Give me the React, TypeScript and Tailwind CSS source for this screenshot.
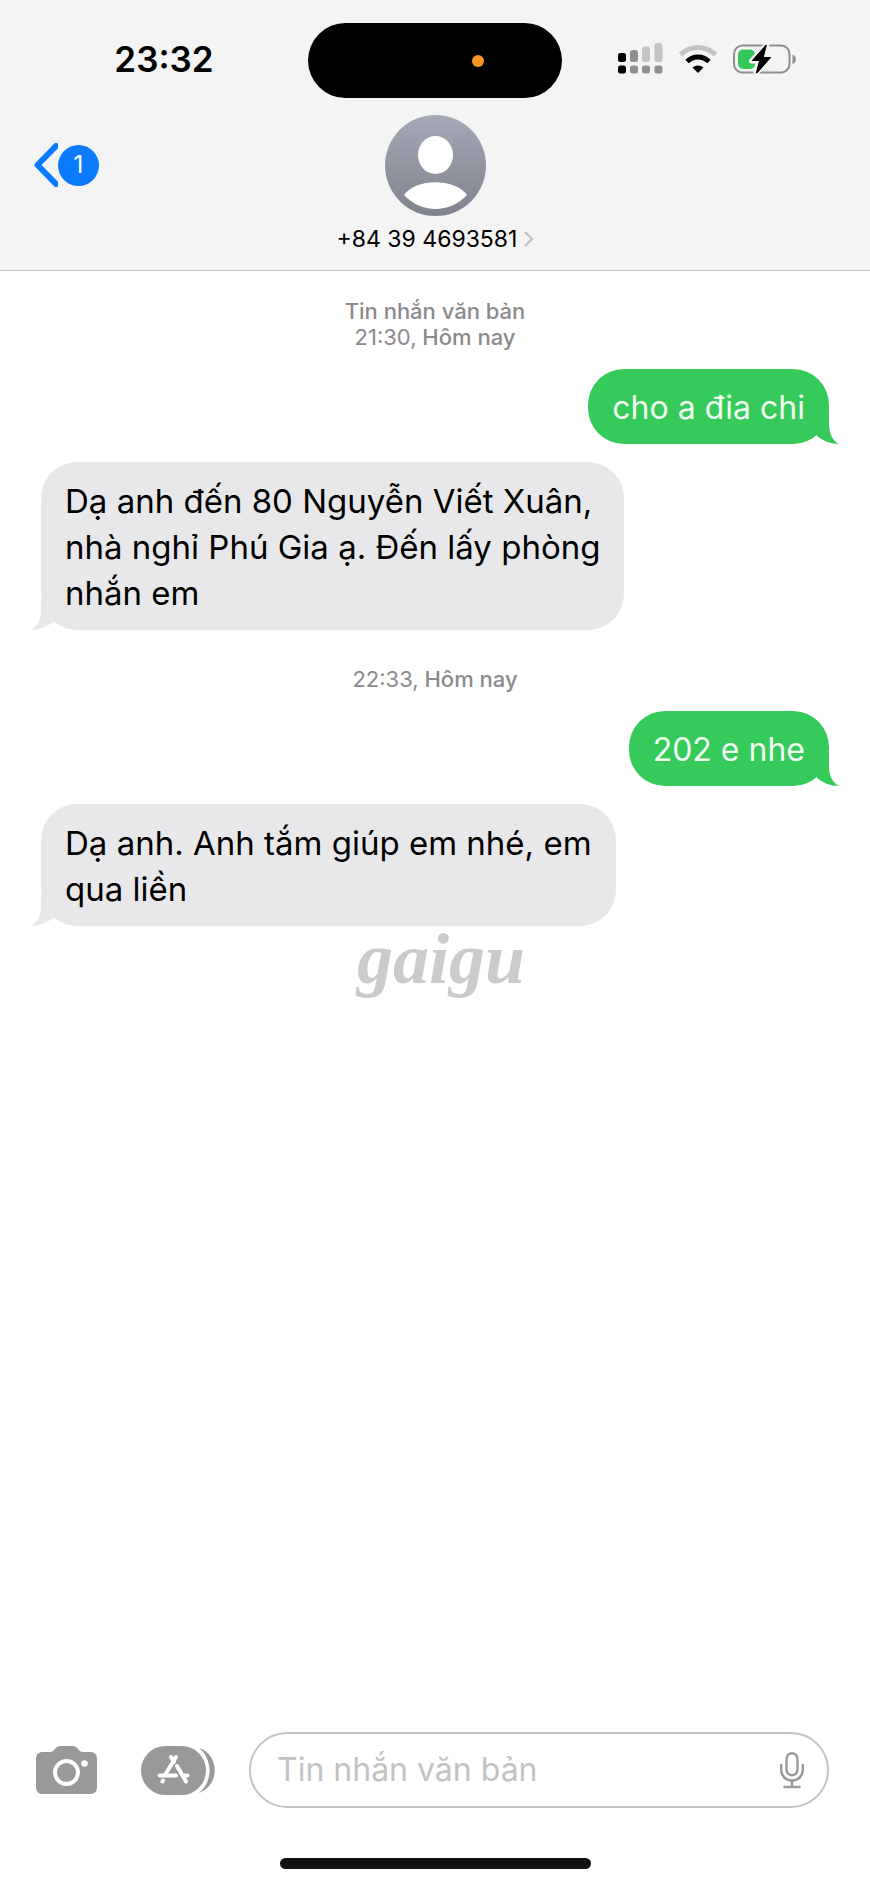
import React from 'react';

type Message = {
    id: number;
    from: 'me' | 'them';
    text: string;
};

type Section = {
    id: number;
    title?: string;
    time: string;
    day: string;
    messages: Message[];
};

const sections: Section[] = [
    {
        id: 1,
        title: 'Tin nhắn văn bản',
        time: '21:30,',
        day: 'Hôm nay',
        messages: [
            { id: 1, from: 'me', text: 'cho a đia chi' },
            { id: 2, from: 'them', text: 'Dạ anh đến 80 Nguyễn Viết Xuân,\nnhà nghỉ Phú Gia ạ. Đến lấy phòng\nnhắn em' },
        ],
    },
    {
        id: 2,
        time: '22:33,',
        day: 'Hôm nay',
        messages: [
            { id: 3, from: 'me', text: '202 e nhe' },
            { id: 4, from: 'them', text: 'Dạ anh. Anh tắm giúp em nhé, em\nqua liền' },
        ],
    },
];

const SignalIcon = () => (
    <svg width="45" height="31" viewBox="0 0 45 31" aria-hidden="true">
        <rect x="0" y="10" width="8" height="9" rx="2.5" fill="#000" />
        <rect x="12" y="7" width="8" height="12" rx="2.5" fill="#8e8e8e" />
        <rect x="24" y="3.5" width="8" height="15.5" rx="2.5" fill="#c4c4c4" />
        <rect x="36.5" y="0" width="8" height="19" rx="2.5" fill="#c4c4c4" />
        <rect x="0" y="22.5" width="8" height="8" rx="2.5" fill="#000" />
        <rect x="12" y="22.5" width="8" height="8" rx="2.5" fill="#8e8e8e" />
        <rect x="24" y="22.5" width="8" height="8" rx="2.5" fill="#8e8e8e" />
        <rect x="36.5" y="22.5" width="8" height="8" rx="2.5" fill="#8e8e8e" />
    </svg>
);

const WifiIcon = () => (
    <svg width="40" height="30" viewBox="0 0 40 30" fill="none" aria-hidden="true">
        <path d="M2.5 10.5C12.5 1 27.5 1 37.5 10.5" stroke="#c4c4c4" strokeWidth="5" />
        <path d="M9 17.5C15.5 11.5 24.5 11.5 31 17.5" stroke="#000" strokeWidth="5" />
        <path d="M14.5 23.5C17.5 20.7 22.5 20.7 25.5 23.5L20 29Z" fill="#000" />
    </svg>
);

const BatteryIcon = () => (
    <svg width="64" height="32" viewBox="0 0 64 32" aria-hidden="true">
        <rect x="1" y="2.5" width="55.5" height="27" rx="8.5" fill="none" stroke="#8e8e8e" strokeWidth="2" />
        <path d="M59.5 11.5C64 13 64 19.5 59.5 21Z" fill="#8e8e8e" />
        <rect x="5" y="6.5" width="17" height="19.5" rx="5" fill="#34c759" />
        <path
            d="M34 1.5L18.5 18H26L22.5 31L38 14.5H30.5Z"
            fill="#000"
            stroke="#f4f4f4"
            strokeWidth="5"
            strokeLinejoin="round"
            paintOrder="stroke"
        />
        <path d="M33 2L19.5 17.5H27L24 30L37.5 14.5H30Z" fill="#000" stroke="#000" strokeLinejoin="round" />
    </svg>
);

const Avatar = () => (
    <svg width="101" height="101" viewBox="0 0 101 101" aria-hidden="true">
        <defs>
            <linearGradient id="avatar" x1="0" y1="0" x2="0" y2="1">
                <stop offset="0" stopColor="#a5a9b6" />
                <stop offset="1" stopColor="#80838c" />
            </linearGradient>
        </defs>
        <circle cx="50.5" cy="50.5" r="50.5" fill="url(#avatar)" />
        <ellipse cx="50.5" cy="40" rx="17.5" ry="19" fill="#fff" />
        <path d="M19 80C31 63 70 63 82 80C65 98.5 36 98.5 19 80Z" fill="#fff" />
    </svg>
);

const CameraIcon = () => (
    <svg width="61" height="48" viewBox="0 0 61 48" aria-hidden="true">
        <path
            d="M7 6H14C16 6 17 5 18 4L20 2C21.5 .5 22.5 0 24.5 0H36C38 0 39.5 .5 41 2L43 4C44 5 45 6 47 6H54C58.5 6 61 8.5 61 13V41C61 45.5 58.5 48 54 48H7C2.5 48 0 45.5 0 41V13C0 8.5 2.5 6 7 6Z"
            fill="#999"
        />
        <circle cx="30.5" cy="26.5" r="11.5" fill="none" stroke="#fff" strokeWidth="4" />
        <circle cx="48.5" cy="17.5" r="3.3" fill="#fff" />
    </svg>
);

const AppStoreIcon = () => (
    <svg width="74" height="49" viewBox="0 0 74 49" aria-hidden="true">
        <rect width="65" height="49" rx="24.5" fill="#999" />
        <path d="M58 2C79 9 79 39 58 47C72 36 72 13 58 2Z" fill="#999" />
        <g stroke="#fff" strokeWidth="4" strokeLinecap="round" fill="none">
            <path d="M35 11L24 29" />
            <path d="M22 34.5L21.5 35.5" />
            <path d="M30 11L33 16" />
            <path d="M36 20L45 35.5" />
            <path d="M18.5 29.5H35" />
            <path d="M43 29.5H46.5" />
        </g>
    </svg>
);

const MicIcon = () => (
    <svg width="24" height="37" viewBox="0 0 24 37" fill="none" stroke="#999" strokeWidth="2.4" aria-hidden="true">
        <rect x="6.5" y="1.2" width="11" height="22" rx="5.5" />
        <path d="M1.2 13V17.5C1.2 24 5.5 28.5 12 28.5C18.5 28.5 22.8 24 22.8 17.5V13" strokeLinecap="round" />
        <path d="M12 28.5V35M4.5 35H19.5" strokeLinecap="round" />
    </svg>
);

const Tail = ({ className }: { className: string }) => (
    <svg className={`absolute bottom-0 ${className}`} width="24" height="34" viewBox="0 0 24 34" fill="currentColor" aria-hidden="true">
        <path d="M13 0V14C13 24 17 31 23 34C15 34 7 31 1 26L0 20Z" />
    </svg>
);

const Bubble = ({ message }: { message: Message }) => {
    if (message.from === 'me') {
        return (
            <div className="relative self-end rounded-[36px] bg-[#36ca5a] pt-4 pr-6 pb-[13px] pl-6">
                <p className="text-[32px] leading-[46px] text-[#effff2]">{message.text}</p>
                <Tail className="-right-[11px] text-[#36ca5a]" />
            </div>
        );
    }
    return (
        <div className="relative self-start rounded-[36px] bg-[#e8e8eb] pt-4 pr-6 pb-[14px] pl-6">
            <p className="text-[33px] leading-[46px] whitespace-pre-line text-black">{message.text}</p>
            <Tail className="-left-[11px] -scale-x-100 text-[#e8e8eb]" />
        </div>
    );
};

const Header = () => (
    <header className="border-b border-[#c6c6c6] bg-[#f4f4f4] pt-[23px]">
        <div className="grid grid-cols-[1fr_254px_1fr] items-center">
            <time className="pb-0.5 pl-5 text-center text-[35px] font-semibold">23:32</time>
            <div className="flex h-[75px] items-center justify-end rounded-full bg-black pr-[78px]">
                <span className="size-3 rounded-full bg-[#fa9422]" />
            </div>
            <div className="flex items-center justify-center gap-[15px] pr-[18px] pb-1">
                <SignalIcon />
                <WifiIcon />
                <BatteryIcon />
            </div>
        </div>

        <div className="mt-[17px] grid grid-cols-[1fr_auto_1fr] items-start">
            <button type="button" aria-label="Quay lại" className="mt-7 ml-[34px] flex items-center justify-self-start">
                <svg width="24" height="44" viewBox="0 0 24 44" fill="none" aria-hidden="true">
                    <path d="M22 3L3.5 22L22 41" stroke="#0a7aff" strokeWidth="6" strokeLinecap="round" strokeLinejoin="round" />
                </svg>
                <span className="flex size-[41px] items-center justify-center rounded-full bg-[#0a7aff] text-2xl text-white">1</span>
            </button>
            <button type="button" className="flex flex-col items-center">
                <Avatar />
                <span className="mt-2 mb-4 flex items-center gap-[7px] text-[23px] leading-[30px] text-black">
                    +84 39 4693581
                    <svg width="9" height="16" viewBox="0 0 9 16" fill="none" aria-hidden="true">
                        <path d="M1 1L8 8L1 15" stroke="#c0c0c3" strokeWidth="2" />
                    </svg>
                </span>
            </button>
        </div>
    </header>
);

const Composer = () => (
    <footer className="mt-auto pb-4">
        <div className="flex items-center pr-[41px] pl-9">
            <button type="button" aria-label="Máy ảnh">
                <CameraIcon />
            </button>
            <button type="button" aria-label="Ứng dụng" className="ml-11">
                <AppStoreIcon />
            </button>
            <div className="ml-[34px] flex h-[76px] min-w-0 flex-1 items-center rounded-full border-2 border-[#c4c4c4] pr-[23px] pl-[26px]">
                <input
                    type="text"
                    aria-label="Tin nhắn văn bản"
                    placeholder="Tin nhắn văn bản"
                    className="min-w-0 flex-1 bg-transparent text-[32px] text-black outline-none placeholder:text-[#c2c2c4]"
                />
                <button type="button" aria-label="Đọc chính tả">
                    <MicIcon />
                </button>
            </div>
        </div>
        <div className="mx-auto mt-[50px] h-[11px] w-[311px] rounded-full bg-[#111]" />
    </footer>
);

export default function App() {
    return (
        <div className="flex min-h-screen flex-col bg-white font-['Inter','Liberation_Sans',sans-serif]">
            <Header />
            <main className="flex flex-col px-[41px]">
                {sections.map((section) => (
                    <section key={section.id} className="flex flex-col">
                        <h2 className={`text-center text-[22px] leading-[26px] font-medium text-[#8a8a8d] ${section.title ? 'mt-[27px]' : 'mt-9'}`}>
                            {section.title && <span className="block">{section.title}</span>}
                            <span className="font-normal">{section.time}</span> {section.day}
                        </h2>
                        <div className="mt-[19px] flex flex-col gap-[18px]">
                            {section.messages.map((message) => (
                                <Bubble key={message.id} message={message} />
                            ))}
                        </div>
                    </section>
                ))}
                <p className="pl-3 text-center font-['Liberation_Serif',serif] text-[72px] leading-[66px] font-bold text-[#cbcbcb] italic">gaigu</p>
            </main>
            <Composer />
        </div>
    );
}
